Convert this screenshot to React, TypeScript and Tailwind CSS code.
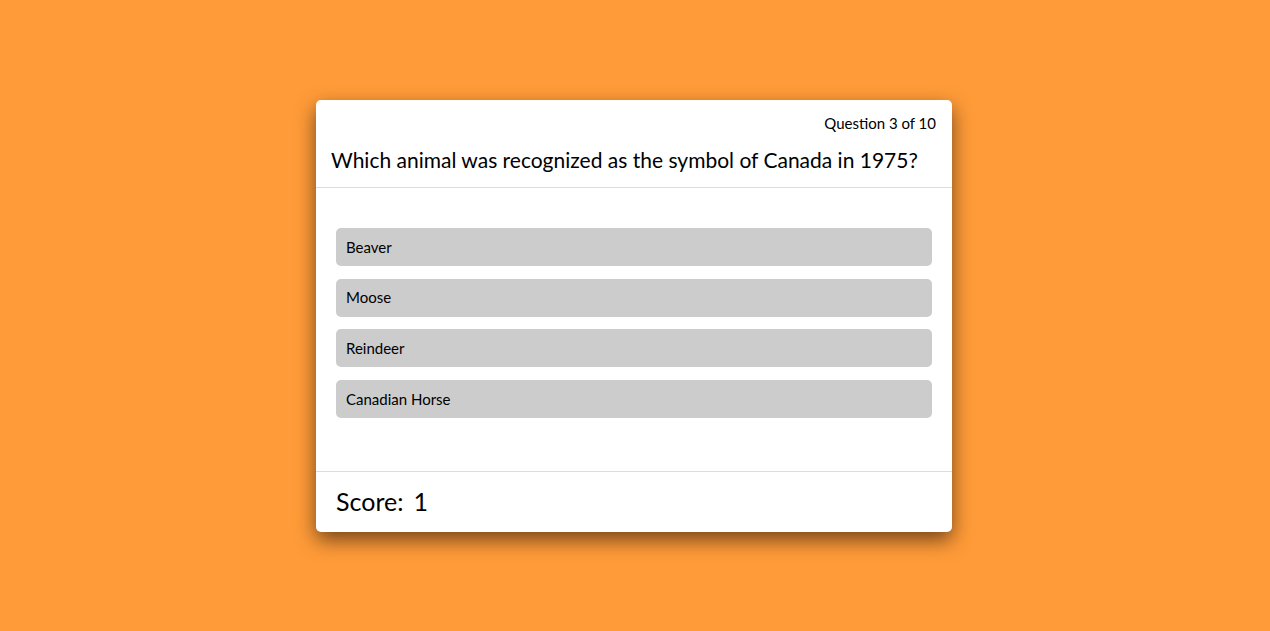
const options = ['Beaver', 'Moose', 'Reindeer', 'Canadian Horse'];

export default function App() {
  return (
    <div className="min-h-screen w-full bg-[#ff9b38] flex justify-center pt-[100px] pr-[2px] font-['Lato',sans-serif] text-black">
      <div className="w-[636px] h-[432px] bg-white rounded-[5px] shadow-[0_8px_20px_rgba(0,0,0,0.55)] flex flex-col">
        <div className="border-b border-[#dcdcdc] pt-[13px] pb-[14px] pl-[15px] pr-[16px]">
          <div className="text-right text-[15px] leading-[20px]">Question 3 of 10</div>
          <div className="mt-[14px] text-[21px] leading-[26px]">Which animal was recognized as the symbol of Canada in 1975?</div>
        </div>
        <div className="flex-1 px-[20px] pt-[40px] flex flex-col gap-[12.7px]">
          {options.map((o) => (
            <div key={o} className="h-[38px] bg-[#cccccc] rounded-[5px] px-[10px] flex items-center text-[15px]">
              {o}
            </div>
          ))}
        </div>
        <div className="border-t border-[#dcdcdc] h-[61px] px-[20px] flex items-center text-[25px]">
          <span>Score:</span>
          <span className="ml-[10px]">1</span>
        </div>
      </div>
    </div>
  );
}
